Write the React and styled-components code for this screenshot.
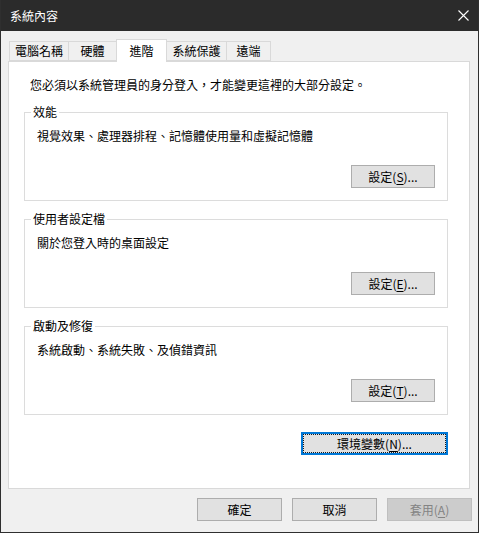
import React from 'react';
import styled, { createGlobalStyle } from 'styled-components';

const GlobalStyle = createGlobalStyle`
  html, body {
    margin: 0;
    padding: 0;
    background: #f0f0f0;
  }
  * {
    box-sizing: border-box;
  }
`;

const FONT = `"Microsoft JhengHei UI", "Noto Sans CJK TC", "Noto Sans", sans-serif`;

const Window = styled.div`
  width: 479px;
  height: 533px;
  display: flex;
  flex-direction: column;
  background: #f0f0f0;
  border: 1px solid #2f2f2f;
  border-top: none;
  font-family: ${FONT};
  font-size: 12px;
  line-height: 16px;
  color: #000;
`;

const TitleBar = styled.div`
  height: 31px;
  flex-shrink: 0;
  background: #2b2b2b;
  color: #fff;
  display: flex;
  align-items: center;
  justify-content: space-between;
  padding: 0 9px 0 9px;
  font-size: 12px;
`;

const Body = styled.div`
  flex: 1;
  display: flex;
  flex-direction: column;
  padding: 8px 8px 0 7px;
`;

const TabRow = styled.div`
  display: flex;
  align-items: flex-end;
  padding-left: 1px;
  margin-bottom: -1px;
`;

const Tab = styled.div`
  width: ${p => p.$w}px;
  height: ${p => (p.$active ? 23 : 20)}px;
  margin-bottom: ${p => (p.$active ? 0 : 1)}px;
  margin-right: -1px;
  border: 1px solid #d9d9d9;
  border-bottom: ${p => (p.$active ? 'none' : '1px solid #d9d9d9')};
  background: ${p => (p.$active ? '#fff' : '#f0f0f0')};
  display: flex;
  justify-content: center;
  align-items: ${p => (p.$active ? 'flex-start' : 'center')};
  padding-top: ${p => (p.$active ? 3 : 0)}px;
  z-index: ${p => (p.$active ? 2 : 1)};
`;

const Panel = styled.div`
  background: #fff;
  border: 1px solid #d9d9d9;
  padding: 15px 21px 33px 15px;
  display: flex;
  flex-direction: column;
`;

const Intro = styled.p`
  margin: 0 0 11px 6px;
`;

const Group = styled.fieldset`
  margin: 0 0 ${p => p.$gap}px 0;
  padding: 0;
  min-width: 0;
  border: 1px solid #dcdcdc;
`;

const Legend = styled.legend`
  margin-left: 6px;
  padding: 0 2px;
  line-height: 16px;
`;

const GroupBody = styled.div`
  padding: 8px 12px 12px 12px;
  display: flex;
  flex-direction: column;
`;

const Desc = styled.p`
  margin: 0;
`;

const Right = styled.div`
  display: flex;
  justify-content: flex-end;
  margin-top: ${p => p.$mt || 0}px;
`;

const Button = styled.button`
  width: ${p => p.$w || 84}px;
  height: 23px;
  padding: 0;
  font-family: ${FONT};
  font-size: 12px;
  line-height: 16px;
  color: ${p => (p.disabled ? '#838383' : '#000')};
  background: ${p => (p.disabled ? '#cccccc' : '#e1e1e1')};
  border: 1px solid ${p => (p.disabled ? '#bfbfbf' : p.$focus ? '#0078d7' : '#adadad')};
  box-shadow: ${p => (p.$focus ? 'inset 0 0 0 1px #0078d7' : 'none')};
  outline: ${p => (p.$focus ? '1px dotted #1a1a1a' : 'none')};
  outline-offset: -3px;

  u {
    text-decoration: underline;
    text-underline-offset: 2px;
  }
`;

const Footer = styled.div`
  display: flex;
  justify-content: flex-end;
  gap: 10px;
  margin: 9px -2px 0 0;
`;

const CloseIcon = () => (
  <svg width="11" height="11" viewBox="0 0 11 11">
    <path d="M0.5 0.5 L10.5 10.5 M10.5 0.5 L0.5 10.5" stroke="#fff" strokeWidth="1.1" fill="none" />
  </svg>
);

const tabs = [
  { label: '電腦名稱', w: 60 },
  { label: '硬體', w: 49 },
  { label: '進階', w: 51, active: true },
  { label: '系統保護', w: 61 },
  { label: '遠端', w: 45 },
];

const groups = [
  { title: '效能', desc: '視覺效果、處理器排程、記憶體使用量和虛擬記憶體', key: 'S' },
  { title: '使用者設定檔', desc: '關於您登入時的桌面設定', key: 'E' },
  { title: '啟動及修復', desc: '系統啟動、系統失敗、及偵錯資訊', key: 'T' },
];

export default function App() {
  return (
    <>
      <GlobalStyle />
      <Window>
        <TitleBar>
          <span>系統內容</span>
          <CloseIcon />
        </TitleBar>
        <Body>
          <TabRow>
            {tabs.map(t => (
              <Tab key={t.label} $w={t.w} $active={t.active}>
                {t.label}
              </Tab>
            ))}
          </TabRow>
          <Panel>
            <Intro>您必須以系統管理員的身分登入，才能變更這裡的大部分設定。</Intro>
            {groups.map((g, i) => (
              <Group key={g.title} $gap={i < groups.length - 1 ? 10 : 0}>
                <Legend>{g.title}</Legend>
                <GroupBody>
                  <Desc>{g.desc}</Desc>
                  <Right $mt={21}>
                    <Button>
                      設定(<u>{g.key}</u>)...
                    </Button>
                  </Right>
                </GroupBody>
              </Group>
            ))}
            <Right $mt={17}>
              <Button $w={147} $focus>
                環境變數(<u>N</u>)...
              </Button>
            </Right>
          </Panel>
          <Footer>
            <Button $w={85}>確定</Button>
            <Button $w={85}>取消</Button>
            <Button $w={85} disabled>
              套用(<u>A</u>)
            </Button>
          </Footer>
        </Body>
      </Window>
    </>
  );
}
